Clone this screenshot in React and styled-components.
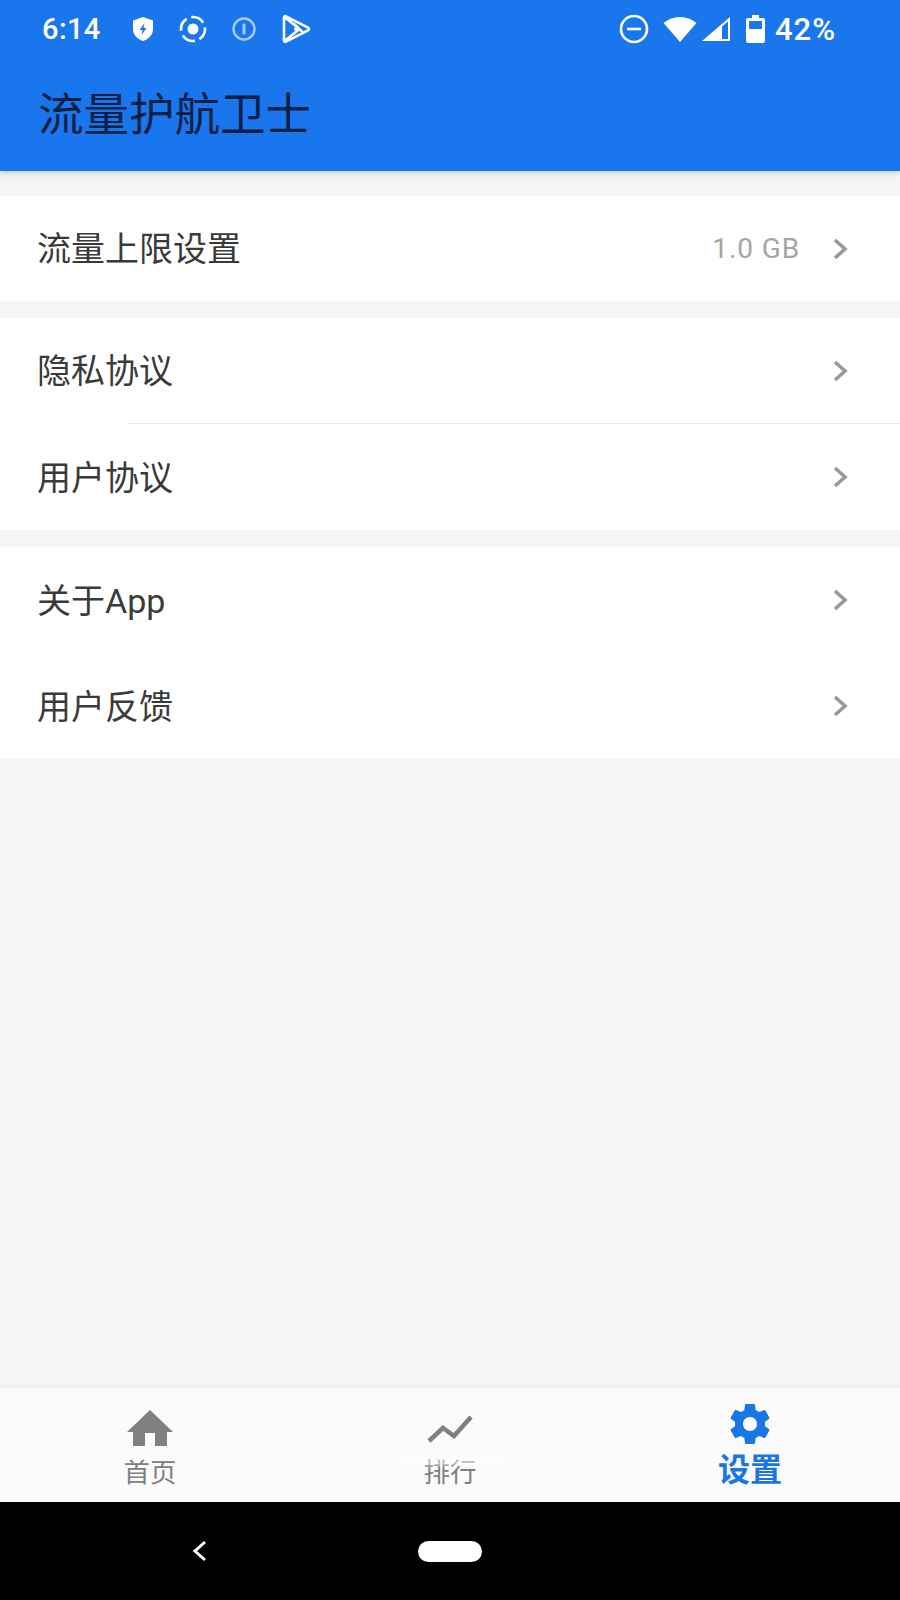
import React from 'react';
import styled, { createGlobalStyle } from 'styled-components';

const CJK = `"Roboto", "Noto Sans CJK SC", sans-serif`;

const GlobalStyle = createGlobalStyle`
  html, body {
    margin: 0;
    padding: 0;
    background: #f5f5f5;
    font-family: ${CJK};
  }
`;

const Screen = styled.div`
  width: 900px;
  height: 1600px;
  display: flex;
  flex-direction: column;
  background: #f5f5f5;
  overflow: hidden;
`;

const Header = styled.header`
  height: 171px;
  flex: none;
  display: flex;
  flex-direction: column;
  background: #1976ec;
  box-shadow: 0 2px 6px rgba(0, 0, 0, 0.18);
`;

const StatusBar = styled.div`
  height: 58px;
  display: flex;
  align-items: center;
  justify-content: space-between;
  padding: 0 64px 0 42px;
  color: #fff;
  font-weight: 500;
  font-size: 29px;
`;

const StatusGroup = styled.div`
  display: flex;
  align-items: center;
`;

const Clock = styled.span`
  width: 89px;
  letter-spacing: 0.4px;
`;

const StatusSlot = styled.span`
  display: flex;
  margin-left: ${({ $gap }) => $gap}px;
`;

const Percent = styled.span`
  margin-left: 10px;
  font-size: 31px;
  letter-spacing: 1px;
`;

const Title = styled.h1`
  margin: 0;
  padding: 28px 0 0 38px;
  font-size: 45.5px;
  line-height: 60px;
  font-weight: 400;
  color: #0c1f44;
`;

const Content = styled.main`
  flex: 1;
  display: flex;
  flex-direction: column;
  padding-top: 25px;
`;

const Group = styled.section`
  background: #fff;
  margin-bottom: 17px;
`;

const Row = styled.div`
  height: ${({ $tall }) => ($tall ? 106 : 105)}px;
  display: flex;
  align-items: center;
  padding: 0 50px 0 37px;
  position: relative;
  box-sizing: border-box;
  ${({ $divider }) => $divider && `border-bottom: 1px solid #e9e9e9;`}
  ${({ $divider }) => $divider && `&::after { content: ''; position: absolute; left: 0; bottom: -1px; width: 128px; height: 1px; background: #fff; }`}
`;

const RowLabel = styled.span`
  flex: 1;
  font-size: 34px;
  line-height: 44px;
  margin-top: 1px;
  color: #3a3a3a;
`;

const RowValue = styled.span`
  font-size: 28px;
  letter-spacing: 0.9px;
  color: #a6a6a6;
  margin-right: 32px;
`;

const Chevron = styled.svg`
  width: 18px;
  height: 24px;
  display: block;
`;

const TabBar = styled.nav`
  height: 117px;
  flex: none;
  display: grid;
  grid-template-columns: repeat(3, 300px);
  background: #fbfbfb;
  border-top: 3px solid #efefef;
  box-sizing: border-box;
`;

const Tab = styled.div`
  display: flex;
  flex-direction: column;
  align-items: center;
  position: relative;
  padding-top: ${({ $top }) => $top}px;
  color: ${({ $active }) => ($active ? '#1976e2' : '#808080')};
`;

const TabIcon = styled.svg`
  width: ${({ $w }) => $w}px;
  height: ${({ $h }) => $h}px;
  display: block;
  fill: currentColor;
`;

const TabLabel = styled.span`
  font-size: ${({ $active }) => ($active ? 32 : 26.5)}px;
  font-weight: ${({ $active }) => ($active ? 700 : 400)};
  line-height: 36px;
  margin-top: ${({ $mt }) => $mt}px;
`;

const Glare = styled.div`
  position: absolute;
  top: 72px;
  left: 95px;
  width: 110px;
  height: 5px;
  border-radius: 3px;
  background: rgba(255, 255, 255, 0.7);
  filter: blur(2px);
`;

const NavBar = styled.div`
  height: 98px;
  flex: none;
  background: #000;
  display: flex;
  align-items: center;
  padding-left: 192px;
  box-sizing: border-box;
`;

const BackIcon = styled.svg`
  width: 16px;
  height: 22px;
  display: block;
`;

const HomePill = styled.div`
  width: 64px;
  height: 21px;
  border-radius: 11px;
  background: #fff;
  margin-left: 210px;
`;

const RowChevron = () => (
  <Chevron viewBox="0 0 18 24">
    <path d="M3 3l10 9-10 9" fill="none" stroke="#999" strokeWidth="3.6" />
  </Chevron>
);

const Shield = () => (
  <svg width="24" height="26" viewBox="0 0 24 26">
    <path d="M12 1l10 3.500V13c0 6-4.400 10-10 12C6.400 23 2 19 2 13V4.500z" fill="#fff" />
    <path d="M13.500 7l-5 7h3l-1 5 5-7h-3z" fill="#1976ec" />
  </svg>
);

const Record = () => (
  <svg width="30" height="28" viewBox="0 0 30 28">
    <circle cx="15" cy="14" r="5.500" fill="#fff" />
    <circle cx="15" cy="14" r="12" fill="none" stroke="#fff" strokeWidth="2.600" strokeDasharray="14 4.800" strokeDashoffset="2" />
  </svg>
);

const InfoRing = () => (
  <svg width="26" height="26" viewBox="0 0 26 26">
    <circle cx="13" cy="13" r="10.500" fill="none" stroke="#a8cdf8" strokeWidth="2.400" />
    <rect x="11.500" y="7.500" width="3" height="11" rx="1.200" fill="#a8cdf8" />
  </svg>
);

const PlayStore = () => (
  <svg width="30" height="30" viewBox="0 0 30 30">
    <path
      d="M3 3.500c0-1.200 1-1.700 2-1.200L27 13.700c1.200.7 1.200 2 0 2.700L5 27.700c-1 .5-2 0-2-1.200zM3.500 3l15 12-15 12M19 15l-6 0M12.500 9.500l9 8.500"
      fill="none"
      stroke="#fff"
      strokeWidth="2.600"
      strokeLinejoin="round"
    />
  </svg>
);

const Dnd = () => (
  <svg width="30" height="30" viewBox="0 0 30 30">
    <circle cx="15" cy="15" r="13" fill="none" stroke="#fff" strokeWidth="2.600" />
    <rect x="8" y="13.700" width="14" height="2.600" fill="#fff" />
  </svg>
);

const Wifi = () => (
  <svg width="34" height="26" viewBox="0 0 34 26">
    <path d="M0.500 7C5 3 11 1 17 1s12 2 16.500 6L17 26z" fill="#fff" />
  </svg>
);

const Signal = () => (
  <svg width="30" height="26" viewBox="0 0 30 26">
    <path d="M1 25L29 1v24z" fill="#fff" />
    <path d="M21 10.500L27 5.500V23h-6z" fill="#1976ec" />
  </svg>
);

const Battery = () => (
  <svg width="19" height="28" viewBox="0 0 19 28">
    <path d="M6 0h7v3h4a2 2 0 0 1 2 2v21a2 2 0 0 1-2 2H2a2 2 0 0 1-2-2V5a2 2 0 0 1 2-2h4z" fill="#fff" />
    <rect x="3" y="6" width="13" height="8" fill="#1976ec" />
  </svg>
);

const groups = [
  [{ label: '流量上限设置', value: '1.0 GB' }],
  [{ label: '隐私协议', divider: true }, { label: '用户协议' }],
  [{ label: '关于App' }, { label: '用户反馈' }],
];

const App = () => (
  <Screen>
    <GlobalStyle />
    <Header>
      <StatusBar>
        <StatusGroup>
          <Clock>6:14</Clock>
          <StatusSlot $gap={0}><Shield /></StatusSlot>
          <StatusSlot $gap={23}><Record /></StatusSlot>
          <StatusSlot $gap={23}><InfoRing /></StatusSlot>
          <StatusSlot $gap={24}><PlayStore /></StatusSlot>
        </StatusGroup>
        <StatusGroup>
          <Dnd />
          <StatusSlot $gap={14}><Wifi /></StatusSlot>
          <StatusSlot $gap={4}><Signal /></StatusSlot>
          <StatusSlot $gap={15}><Battery /></StatusSlot>
          <Percent>42%</Percent>
        </StatusGroup>
      </StatusBar>
      <Title>流量护航卫士</Title>
    </Header>
    <Content>
      {groups.map((rows) => (
        <Group key={rows[0].label}>
          {rows.map((row) => (
            <Row key={row.label} $divider={row.divider} $tall={rows.length > 1}>
              <RowLabel>{row.label}</RowLabel>
              {row.value && <RowValue>{row.value}</RowValue>}
              <RowChevron />
            </Row>
          ))}
        </Group>
      ))}
    </Content>
    <TabBar>
      <Tab $top={22}>
        <TabIcon $w={46} $h={36} viewBox="0 0 46 36">
          <path d="M23 0l23 22h-6v14H28V23H18v13H6V22H0z" />
        </TabIcon>
        <TabLabel $mt={9}>首页</TabLabel>
      </Tab>
      <Tab $top={26}>
        <TabIcon $w={46} $h={30} viewBox="0 0 46 30">
          <path d="M2 27l14-13 11 8L44 3" fill="none" stroke="currentColor" strokeWidth="4.500" />
        </TabIcon>
        <TabLabel $mt={11}>排行</TabLabel>
        <Glare />
      </Tab>
      <Tab $top={16} $active>
        <TabIcon $w={44} $h={40} viewBox="2 2 20 20">
          <path d="M19.430 12.980c.04-.32.070-.64.070-.98s-.03-.66-.07-.98l2.110-1.650c.19-.15.240-.42.120-.64l-2-3.460c-.12-.22-.39-.3-.61-.22l-2.490 1c-.52-.4-1.080-.73-1.690-.98l-.38-2.650C14.460 2.180 14.250 2 14 2h-4c-.25 0-.46.180-.49.420l-.38 2.650c-.61.250-1.170.59-1.690.98l-2.490-1c-.23-.09-.49 0-.61.220l-2 3.460c-.13.220-.07.490.12.640l2.110 1.650c-.04.320-.07.650-.07.980s.03.660.07.980l-2.110 1.650c-.19.150-.24.420-.12.640l2 3.460c.12.220.39.300.61.220l2.490-1c.52.400 1.080.730 1.690.980l.38 2.650c.03.240.24.420.49.420h4c.25 0 .46-.18.49-.42l.38-2.650c.61-.25 1.170-.59 1.690-.98l2.490 1c.23.090.49 0 .61-.22l2-3.460c.12-.22.070-.49-.12-.64l-2.110-1.650zM12 15.500c-1.930 0-3.500-1.570-3.500-3.500s1.570-3.500 3.500-3.500 3.500 1.570 3.500 3.500-1.570 3.500-3.500 3.500z" />
        </TabIcon>
        <TabLabel $active $mt={8}>设置</TabLabel>
      </Tab>
    </TabBar>
    <NavBar>
      <BackIcon viewBox="0 0 16 22">
        <path d="M13 2L3 11l10 9" fill="none" stroke="#fff" strokeWidth="3" />
      </BackIcon>
      <HomePill />
    </NavBar>
  </Screen>
);

export default App;
